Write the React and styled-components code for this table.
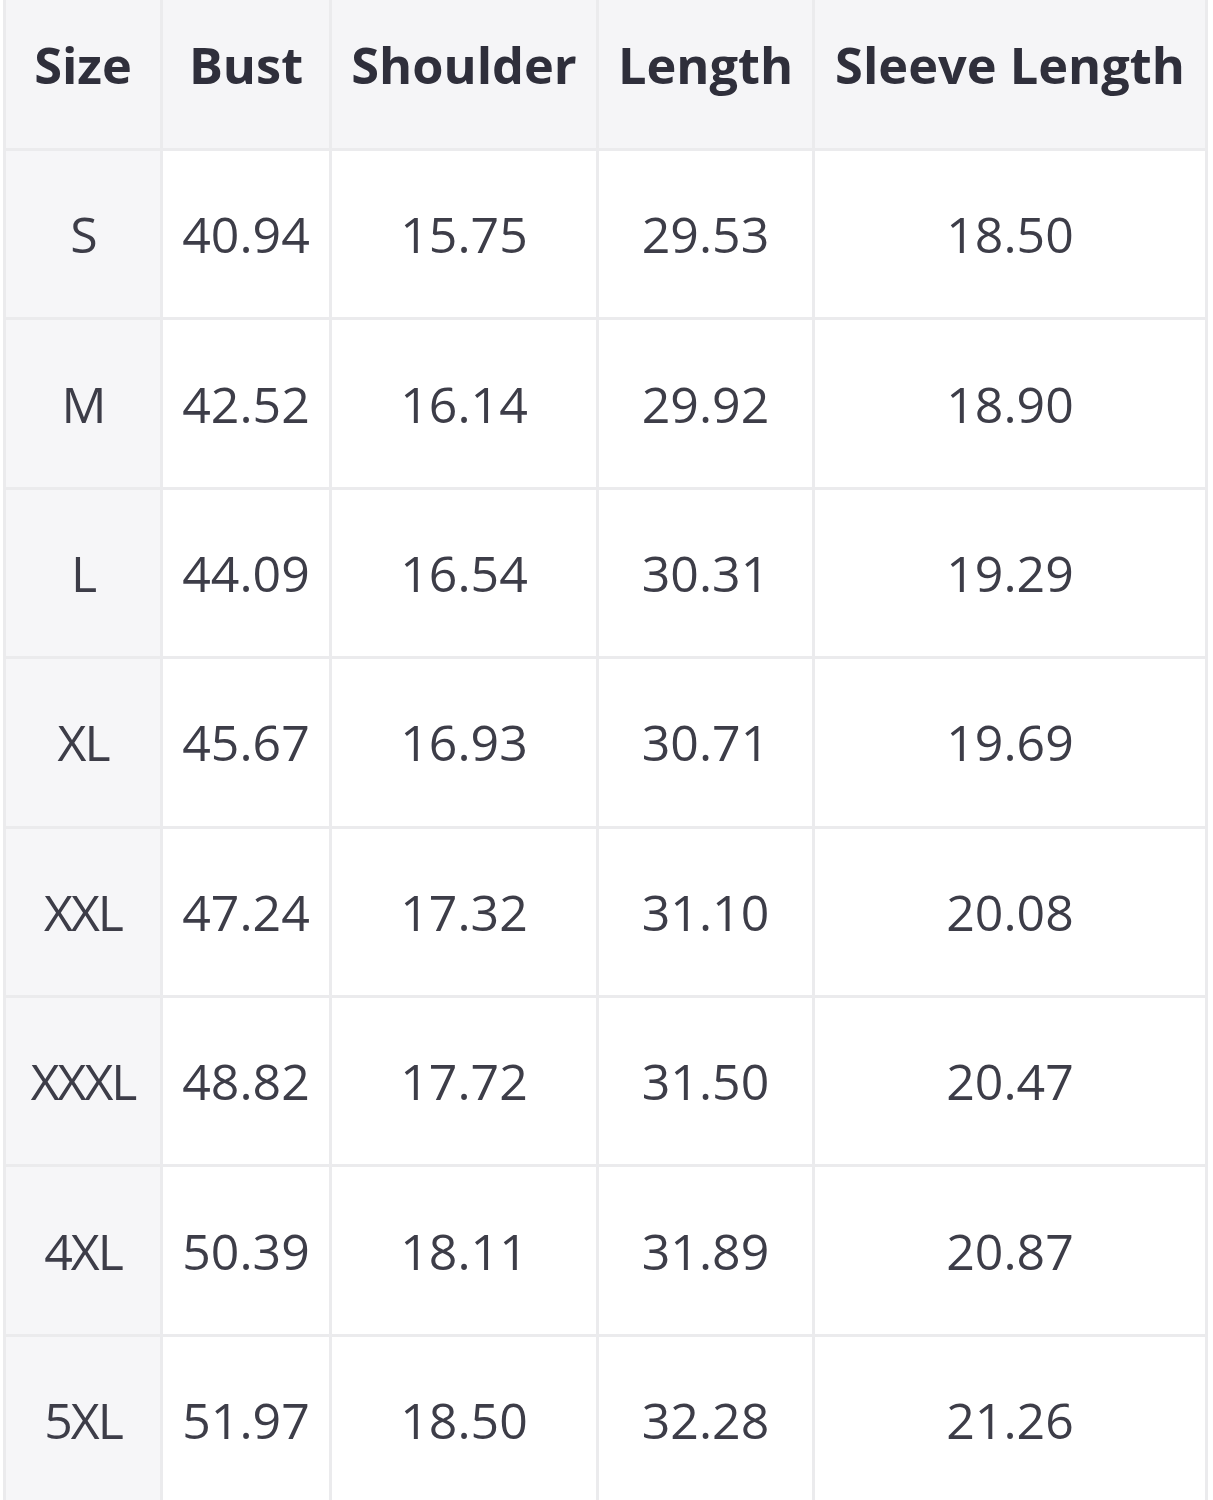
import React from "react";
import styled, { createGlobalStyle } from "styled-components";

const Global = createGlobalStyle`
  html, body { margin: 0; padding: 0; background: #ffffff; }
  body { font-family: "Open Sans", "Noto Sans", "Liberation Sans", sans-serif; }
`;

const Sheet = styled.div`
  display: grid;
  grid-template-columns: 154px 166px 264px 213px 390px;
  grid-template-rows: 148px;
  grid-auto-rows: 166.4px;
  column-gap: 3px;
  row-gap: 3px;
  width: max-content;
  margin-left: 3px;
  padding: 0 3px 3px 3px;
  background: #ebebed;
`;

const HeadCell = styled.div`
  display: flex;
  align-items: center;
  justify-content: center;
  padding-bottom: 20px;
  box-sizing: border-box;
  background: #f5f5f7;
  color: #2f2f3b;
  font-weight: 700;
  font-size: 50.5px;
  white-space: nowrap;
`;

const Cell = styled.div`
  display: flex;
  align-items: center;
  justify-content: center;
  background: ${(p) => (p.$first ? "#f6f6f8" : "#ffffff")};
  color: #3d3d48;
  font-weight: 400;
  font-size: 50px;
  letter-spacing: ${(p) => (p.$first ? "-2px" : "0")};
  white-space: nowrap;
`;

const headers = ["Size", "Bust", "Shoulder", "Length", "Sleeve Length"];
const rows = [
  ["S", "40.94", "15.75", "29.53", "18.50"],
  ["M", "42.52", "16.14", "29.92", "18.90"],
  ["L", "44.09", "16.54", "30.31", "19.29"],
  ["XL", "45.67", "16.93", "30.71", "19.69"],
  ["XXL", "47.24", "17.32", "31.10", "20.08"],
  ["XXXL", "48.82", "17.72", "31.50", "20.47"],
  ["4XL", "50.39", "18.11", "31.89", "20.87"],
  ["5XL", "51.97", "18.50", "32.28", "21.26"],
];

export default function App() {
  return (
    <>
      <Global />
      <Sheet>
        {headers.map((h) => (
          <HeadCell key={h}>{h}</HeadCell>
        ))}
        {rows.map((r) =>
          r.map((v, i) => (
            <Cell key={r[0] + i} $first={i === 0}>
              {v}
            </Cell>
          ))
        )}
      </Sheet>
    </>
  );
}
